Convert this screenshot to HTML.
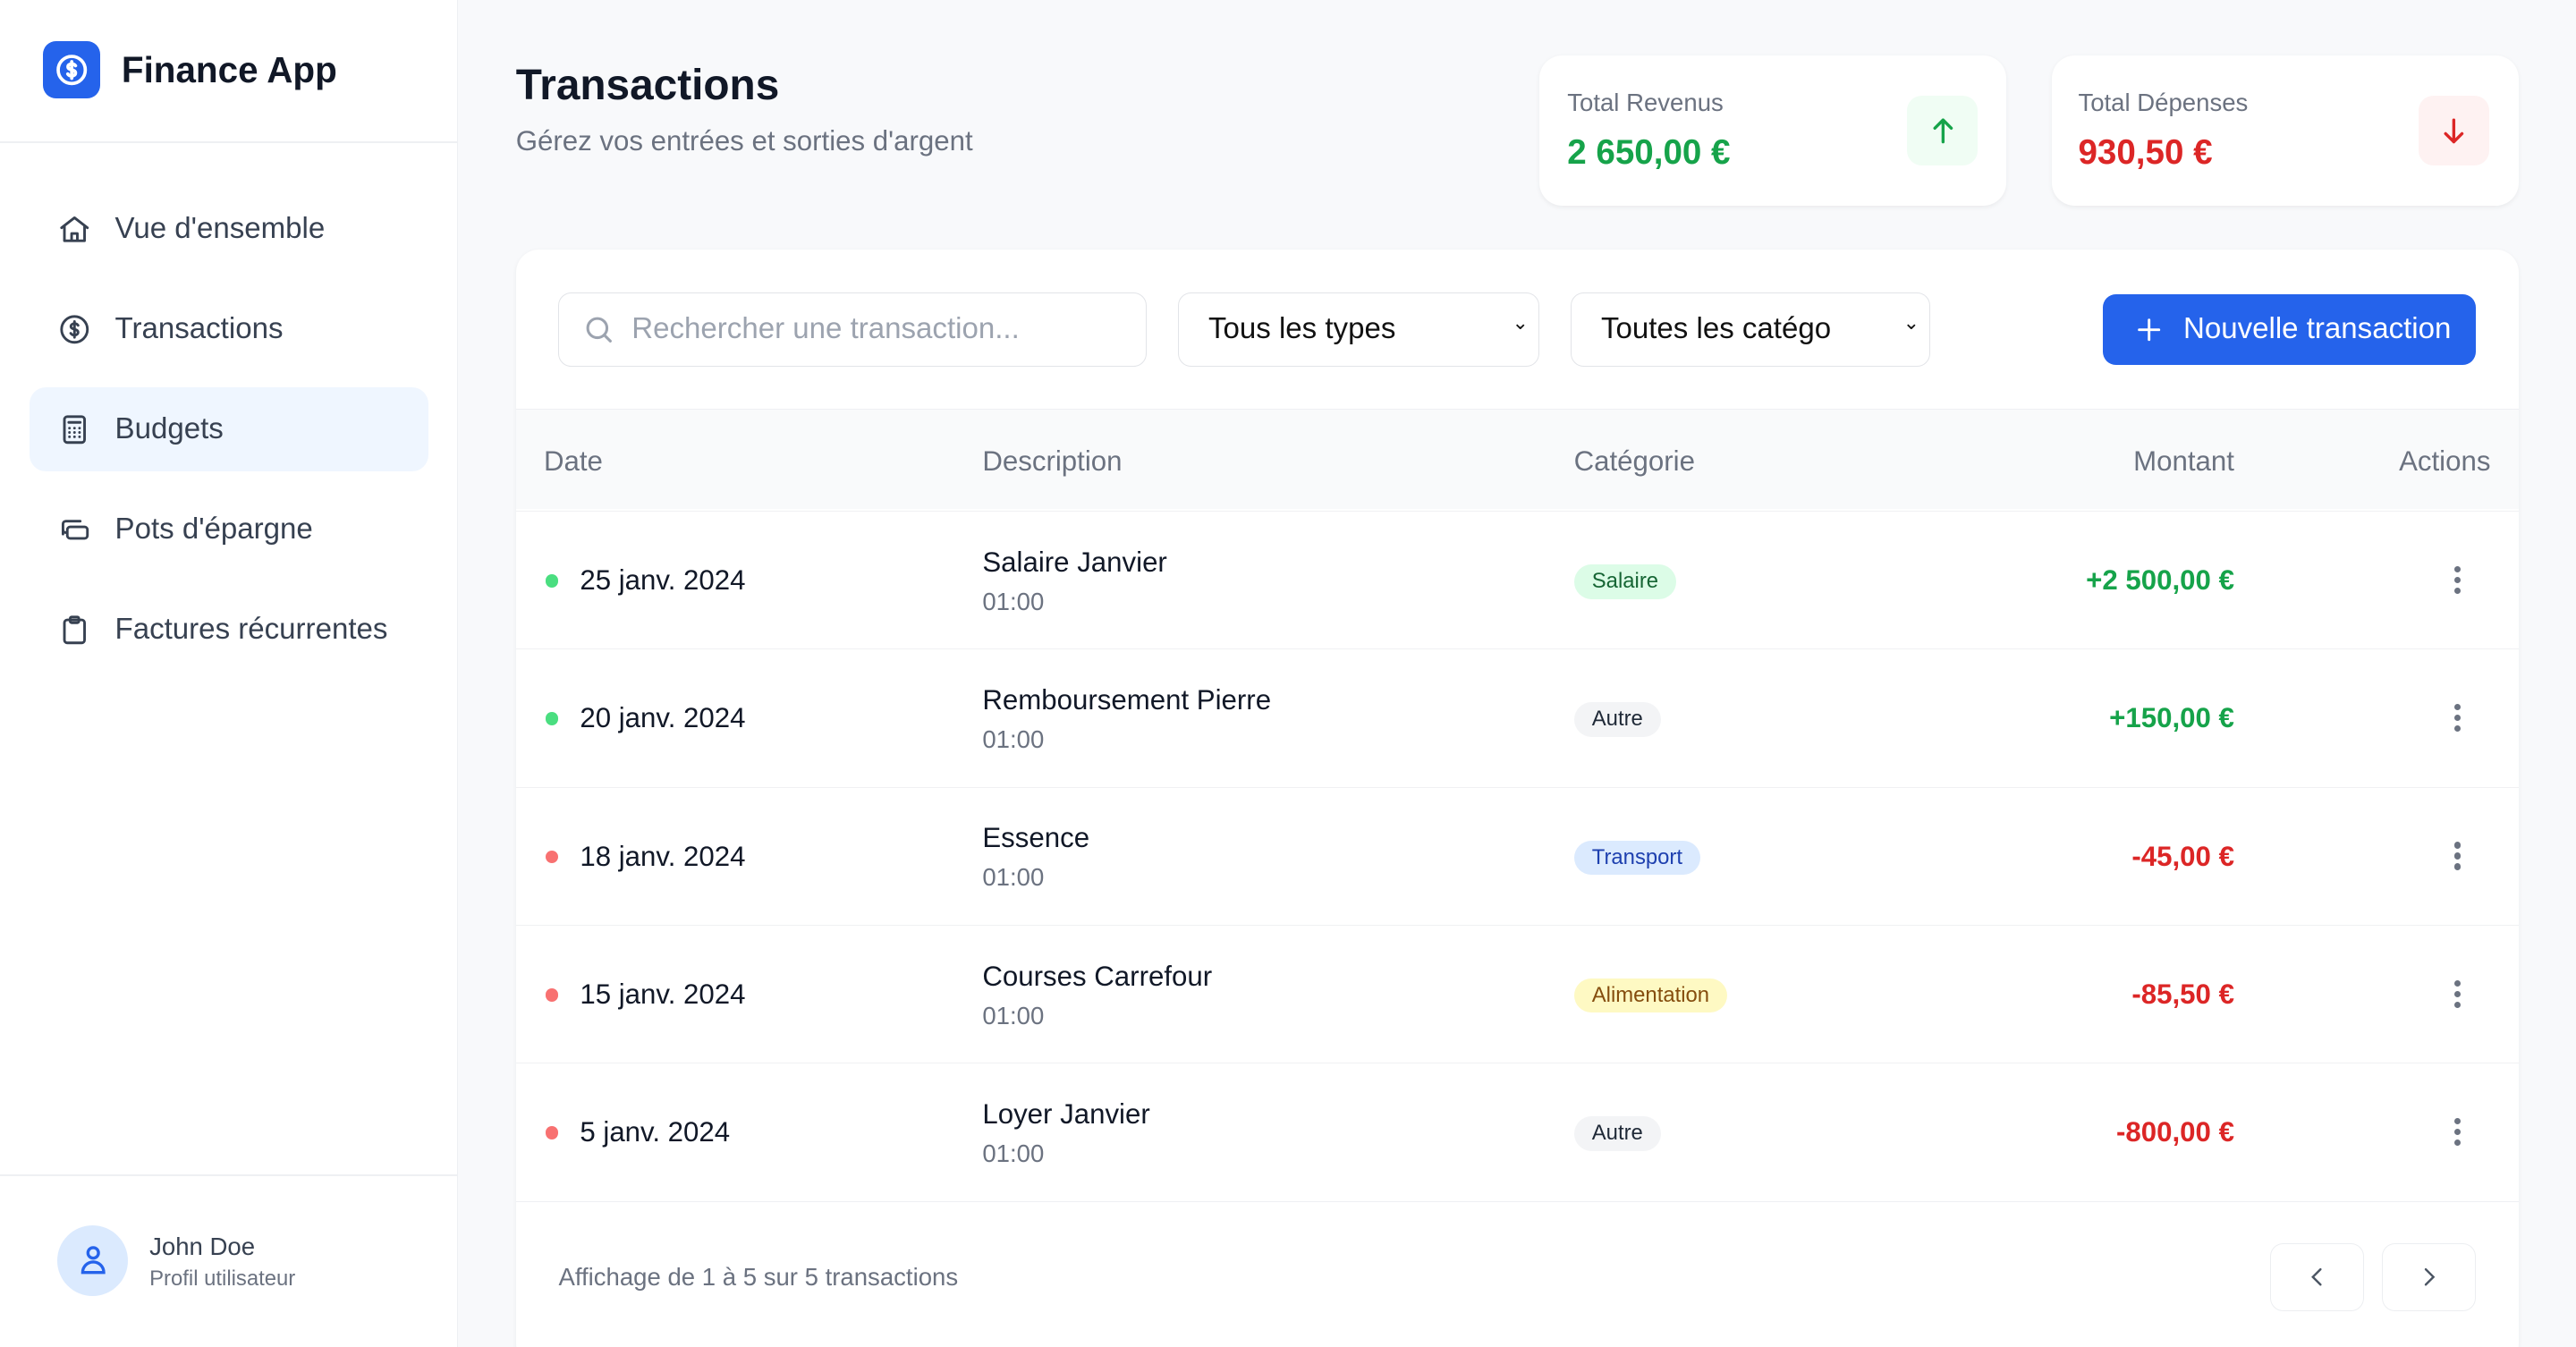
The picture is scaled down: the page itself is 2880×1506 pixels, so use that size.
<!DOCTYPE html>
<html><head><meta charset="utf-8"><style>
*{box-sizing:border-box;margin:0;padding:0}
html,body{width:2880px;height:1506px;overflow:hidden;background:#f8f9fb}
#w{zoom:1.83673;width:1568px;height:820px;position:relative;font-family:"Liberation Sans",Arial,sans-serif;color:#111827}
.abs{position:absolute}
.side{left:0;top:0;width:279px;height:820px;background:#fff;border-right:1px solid #eef0f3}
.nav{position:absolute;left:18px;width:243px;height:51px;border-radius:10px;display:flex;align-items:center;padding-left:17px;font-size:18px;color:#374151;font-weight:500}
.nav svg{width:21px;height:21px;margin-right:14px;stroke:#374151;fill:none;stroke-width:1.8;stroke-linecap:round;stroke-linejoin:round}
.card{background:#fff;border-radius:14px;box-shadow:0 1px 3px rgba(0,0,0,.06)}
.lbl{font-size:15px;color:#6b7280}
.inp{position:absolute;top:26px;height:45px;border:1px solid #e2e4e8;border-radius:8px;background:#fff;font-size:18px;display:flex;align-items:center}
.th{position:absolute;font-size:17px;color:#6b7280}
.row{position:absolute;left:0;width:1219px;height:84px;border-top:1px solid #f0f1f3}
.row>*{position:absolute}
.dot{left:18px;top:38px;width:8px;height:8px;border-radius:50%}
.dt{left:39px;top:32px;font-size:17px;color:#111827}
.ds{left:284px;top:21px;font-size:17px;font-weight:500}
.tm{left:284px;top:46px;font-size:15px;color:#6b7280}
.bd{left:644px;top:32px;height:21px;padding:0 11px;border-radius:11px;font-size:13px;line-height:21px;font-weight:500}
.am{right:173px;top:32px;font-size:17px;font-weight:600}
.mn{left:1180px;top:33px;width:4px}
.mn i{display:block;width:4px;height:4px;border-radius:50%;background:#6b7280;margin-bottom:2.5px}
.pb{position:absolute;width:57px;height:41px;border:1px solid #eceef1;border-radius:8px;background:#fff;display:flex;align-items:center;justify-content:center}
</style></head><body><div id="w">
<div class="abs side">
 <div class="abs" style="left:26px;top:25px;width:35px;height:35px;background:#2563eb;border-radius:8px;display:flex;align-items:center;justify-content:center">
  <svg width="22" height="22" viewBox="0 0 24 24" fill="none" stroke="#fff" stroke-width="2.2" stroke-linecap="round"><circle cx="12" cy="12" r="9"/><path d="M14.5 9.2c-.5-.8-1.5-1.2-2.5-1.2-1.5 0-2.5.8-2.5 1.9 0 2.6 5 1.4 5 4.1 0 1.1-1 2-2.5 2-1.1 0-2.1-.5-2.6-1.3M12 6.5v11"/></svg>
 </div>
 <div class="abs" style="left:74px;top:30px;font-size:22px;font-weight:700;color:#111827">Finance App</div>
 <div class="abs" style="left:0;top:86px;width:279px;height:1px;background:#eef0f3"></div>
 <div class="nav" style="top:114px"><svg viewBox="0 0 24 24"><path d="M3 11l9-7 9 7M5 9.5V20h14V9.5M10 20v-5h4v5"/></svg>Vue d'ensemble</div>
 <div class="nav" style="top:175px"><svg viewBox="0 0 24 24"><circle cx="12" cy="12" r="9"/><path d="M14.5 9.2c-.5-.8-1.5-1.2-2.5-1.2-1.5 0-2.5.8-2.5 1.9 0 2.6 5 1.4 5 4.1 0 1.1-1 2-2.5 2-1.1 0-2.1-.5-2.6-1.3M12 6.5v11"/></svg>Transactions</div>
 <div class="nav" style="top:236px;background:#eff6ff"><svg viewBox="0 0 24 24"><rect x="5" y="3" width="14" height="18" rx="2"/><path d="M8 7h8M8.5 11h.01M12 11h.01M15.5 11h.01M8.5 14h.01M12 14h.01M15.5 14h.01M8.5 17h.01M12 17h.01M15.5 17h.01"/></svg>Budgets</div>
 <div class="nav" style="top:297px"><svg viewBox="0 0 24 24"><path d="M4 15V8a2 2 0 012-2h10"/><rect x="7" y="10" width="14" height="8" rx="2"/><path d="M4 12a2 2 0 002 2"/></svg>Pots d'épargne</div>
 <div class="nav" style="top:358px"><svg viewBox="0 0 24 24"><rect x="5" y="5" width="14" height="16" rx="2"/><rect x="9" y="3" width="6" height="4" rx="1"/></svg>Factures récurrentes</div>
 <div class="abs" style="left:0;top:715px;width:279px;height:1px;background:#eef0f3"></div>
 <div class="abs" style="left:35px;top:746px;width:43px;height:43px;border-radius:50%;background:#dbeafe;display:flex;align-items:center;justify-content:center">
  <svg width="22" height="22" viewBox="0 0 24 24" fill="none" stroke="#2563eb" stroke-width="2"><circle cx="12" cy="7" r="3.5"/><path d="M5 20a7 7 0 0114 0z"/></svg>
 </div>
 <div class="abs" style="left:91px;top:750px;font-size:15px;color:#374151;font-weight:500">John Doe</div>
 <div class="abs" style="left:91px;top:771px;font-size:13px;color:#6b7280">Profil utilisateur</div>
</div>

<div class="abs" style="left:314px;top:37px;font-size:26px;font-weight:700;color:#111827">Transactions</div>
<div class="abs" style="left:314px;top:76px;font-size:17px;color:#6b7280">Gérez vos entrées et sorties d'argent</div>

<div class="abs card" style="left:937px;top:34px;width:284px;height:91px">
 <div class="abs lbl" style="left:17px;top:20px">Total Revenus</div>
 <div class="abs" style="left:17px;top:47px;font-size:21px;font-weight:700;color:#16a34a">2 650,00 €</div>
 <div class="abs" style="left:224px;top:24px;width:43px;height:43px;border-radius:9px;background:#f0fdf4;display:flex;align-items:center;justify-content:center"><svg width="20" height="20" viewBox="0 0 24 24" fill="none" stroke="#16a34a" stroke-width="2.2" stroke-linecap="round" stroke-linejoin="round"><path d="M12 20V4M6 10l6-6 6 6"/></svg></div>
</div>
<div class="abs card" style="left:1249px;top:34px;width:284px;height:91px">
 <div class="abs lbl" style="left:16px;top:20px">Total Dépenses</div>
 <div class="abs" style="left:16px;top:47px;font-size:21px;font-weight:700;color:#dc2626">930,50 €</div>
 <div class="abs" style="left:223px;top:24px;width:43px;height:43px;border-radius:9px;background:#fef2f2;display:flex;align-items:center;justify-content:center"><svg width="20" height="20" viewBox="0 0 24 24" fill="none" stroke="#dc2626" stroke-width="2.2" stroke-linecap="round" stroke-linejoin="round"><path d="M12 4v16M6 14l6 6 6-6"/></svg></div>
</div>

<div class="abs card" style="left:314px;top:152px;width:1219px;height:680px;overflow:hidden">
 <div class="inp" style="left:26px;width:358px;padding-left:14px;color:#9ca3af"><svg width="20" height="20" viewBox="0 0 24 24" fill="none" stroke="#9ca3af" stroke-width="2" stroke-linecap="round" style="margin-right:10px"><circle cx="11" cy="11" r="7"/><path d="M16 16l4.5 4.5"/></svg>Rechercher une transaction...</div>
 <div class="inp" style="left:403px;width:220px;padding-left:18px;color:#111">Tous les types<span style="position:absolute;right:6px;top:11px;font-size:12px">&#8964;</span></div>
 <div class="inp" style="left:642px;width:219px;padding-left:18px;color:#111">Toutes les catégo<span style="position:absolute;right:6px;top:11px;font-size:12px">&#8964;</span></div>
 <div class="abs" style="left:966px;top:27px;width:227px;height:43px;background:#2563eb;border-radius:8px;color:#fff;font-size:18px;font-weight:500;display:flex;align-items:center;padding-left:20px"><svg width="16" height="16" viewBox="0 0 24 24" fill="none" stroke="#fff" stroke-width="2.4" stroke-linecap="round" style="margin-right:13px"><path d="M12 3v18M3 12h18"/></svg>Nouvelle transaction</div>
 <div class="abs" style="left:0;top:97px;width:1219px;height:61px;background:#f9fafb;border-top:1px solid #eef0f3"></div>
 <div class="th" style="left:17px;top:119px">Date</div>
 <div class="th" style="left:284px;top:119px">Description</div>
 <div class="th" style="left:644px;top:119px">Catégorie</div>
 <div class="th" style="right:173px;top:119px">Montant</div>
 <div class="th" style="right:17px;top:119px">Actions</div>

 <div class="row" style="top:159px"><span class="dot" style="background:#4ade80"></span><span class="dt">25 janv. 2024</span><span class="ds">Salaire Janvier</span><span class="tm">01:00</span><span class="bd" style="background:#dcfce7;color:#166534">Salaire</span><span class="am" style="color:#16a34a">+2 500,00 €</span><span class="mn"><i></i><i></i><i></i></span></div>
 <div class="row" style="top:243px"><span class="dot" style="background:#4ade80"></span><span class="dt">20 janv. 2024</span><span class="ds">Remboursement Pierre</span><span class="tm">01:00</span><span class="bd" style="background:#f3f4f6;color:#1f2937">Autre</span><span class="am" style="color:#16a34a">+150,00 €</span><span class="mn"><i></i><i></i><i></i></span></div>
 <div class="row" style="top:327px"><span class="dot" style="background:#f87171"></span><span class="dt">18 janv. 2024</span><span class="ds">Essence</span><span class="tm">01:00</span><span class="bd" style="background:#dbeafe;color:#1e40af">Transport</span><span class="am" style="color:#dc2626">-45,00 €</span><span class="mn"><i></i><i></i><i></i></span></div>
 <div class="row" style="top:411px"><span class="dot" style="background:#f87171"></span><span class="dt">15 janv. 2024</span><span class="ds">Courses Carrefour</span><span class="tm">01:00</span><span class="bd" style="background:#fef9c3;color:#854d0e">Alimentation</span><span class="am" style="color:#dc2626">-85,50 €</span><span class="mn"><i></i><i></i><i></i></span></div>
 <div class="row" style="top:495px"><span class="dot" style="background:#f87171"></span><span class="dt">5 janv. 2024</span><span class="ds">Loyer Janvier</span><span class="tm">01:00</span><span class="bd" style="background:#f3f4f6;color:#1f2937">Autre</span><span class="am" style="color:#dc2626">-800,00 €</span><span class="mn"><i></i><i></i><i></i></span></div>
 <div class="abs" style="left:0;top:579px;width:1219px;height:1px;background:#eef0f3"></div>
 <div class="abs" style="left:26px;top:617px;font-size:15px;color:#6b7280">Affichage de 1 à 5 sur 5 transactions</div>
 <div class="pb" style="left:1068px;top:605px"><svg width="16" height="16" viewBox="0 0 24 24" fill="none" stroke="#4b5563" stroke-width="2" stroke-linecap="round"><path d="M15 5l-7 7 7 7"/></svg></div>
 <div class="pb" style="left:1136px;top:605px"><svg width="16" height="16" viewBox="0 0 24 24" fill="none" stroke="#4b5563" stroke-width="2" stroke-linecap="round"><path d="M9 5l7 7-7 7"/></svg></div>
</div>
</div></body></html>
